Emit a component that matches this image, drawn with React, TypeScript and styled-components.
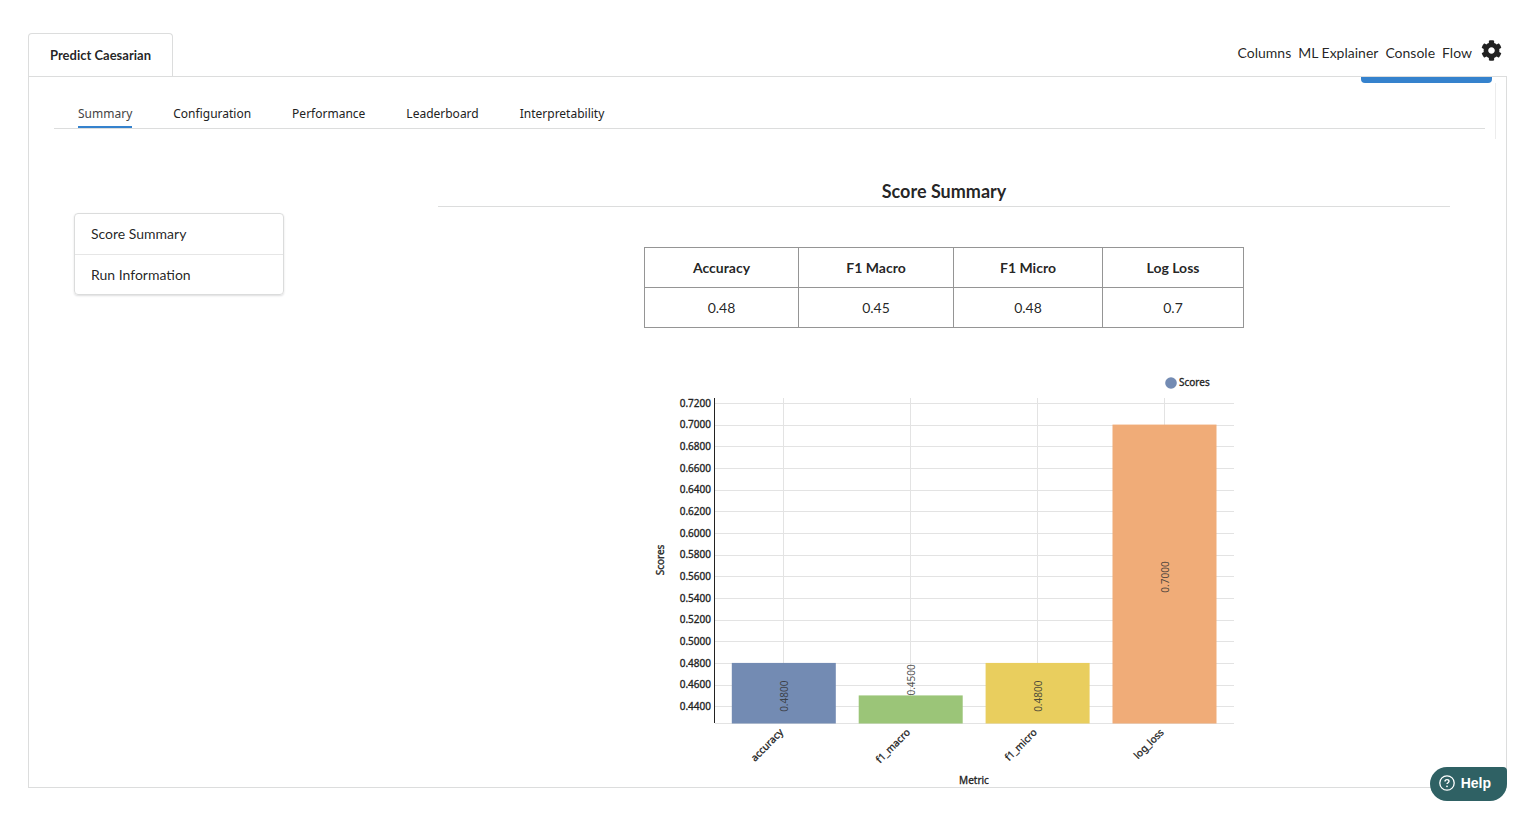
import React from "react";
import styled, { createGlobalStyle } from "styled-components";
import { FaCog } from "react-icons/fa";

const GlobalStyle = createGlobalStyle`
  *, *::before, *::after { box-sizing: border-box; }
  body {
    margin: 0;
    background: #fff;
    color: rgba(0, 0, 0, 0.87);
    font: 14px/20px Lato, "Liberation Sans", sans-serif;
  }
`;

const Page = styled.div`
  padding: 33px 20px 25px 28px;
`;

const Header = styled.header`
  display: flex;
  justify-content: space-between;
  align-items: flex-start;
`;

const ProjectTab = styled.button`
  min-width: 145px;
  height: 43px;
  padding: 0 20px;
  border: 1px solid #dcdddd;
  border-bottom: 0;
  border-radius: 4px 4px 0 0;
  background: #fff;
  color: rgba(0, 0, 0, 0.87);
  font: bold 13px/20px Lato, sans-serif;
`;

const HeaderLinks = styled.nav`
  display: flex;
  align-items: flex-start;
  gap: 7px;
  padding: 7px 5px 0 0;
`;

const HeaderLink = styled.a`
  padding-top: 3px;
  color: inherit;
  text-decoration: none;
`;

const GearButton = styled.button`
  display: flex;
  margin-left: 2px;
  padding: 0;
  border: 0;
  background: none;
  color: #212121;
`;

const Panel = styled.main`
  border: 1px solid #dcdddd;
`;

const ActionStrip = styled.div`
  display: flex;
  justify-content: flex-end;
  padding-right: 14px;
`;

const ActionButton = styled.button`
  width: 131px;
  height: 6px;
  padding: 0;
  border: 0;
  border-radius: 0 0 4px 4px;
  background: #3582cd;
`;

const TabArea = styled.div`
  margin-right: 10px;
  padding: 18px 10px 10px 25px;
  border-right: 1px solid #ececec;
`;

const Tabs = styled.nav`
  display: flex;
  gap: 41px;
  padding-left: 24px;
  border-bottom: 1px solid #dcdddd;
`;

const Tab = styled.button<{ $active?: boolean }>`
  height: 27px;
  padding: 0;
  border: 0;
  border-bottom: 2px solid ${(p) => (p.$active ? "#3582cd" : "transparent")};
  background: none;
  color: ${(p) => (p.$active ? "#444" : "#222")};
  font: 12px/20px "Noto Sans", sans-serif;
`;

const Content = styled.div`
  display: flex;
  align-items: flex-start;
  gap: 154px;
  padding: 40px 56px 0 45px;
`;

const SideMenu = styled.nav`
  flex: 0 0 210px;
  margin-top: 34px;
  border: 1px solid #dbdcdc;
  border-radius: 4px;
  box-shadow: 0 1px 2px rgba(34, 36, 38, 0.15);
`;

const SideItem = styled.a`
  display: flex;
  align-items: center;
  height: 40px;
  padding: 0 16px;
  color: inherit;
  text-decoration: none;

  & + & {
    border-top: 1px solid #e6e6e6;
  }
`;

const Report = styled.section`
  display: flex;
  flex: 1;
  flex-direction: column;
  align-items: center;
`;

const Title = styled.h3`
  align-self: stretch;
  margin: 0 0 40px;
  padding-bottom: 3px;
  border-bottom: 1px solid #dcdddd;
  font: bold 18px/24px Lato, sans-serif;
  text-align: center;
`;

const ScoreTable = styled.table`
  width: 600px;
  margin-bottom: 42px;
  border-collapse: collapse;
  table-layout: fixed;
  text-align: center;

  th,
  td {
    height: 40px;
    padding: 0;
    border: 1px solid #959595;
  }
`;

const HeadCell = styled.th<{ $width: number }>`
  width: ${(p) => p.$width}px;
`;

const Chart = styled.svg`
  display: block;
  width: 600px;
  height: 417px;
  font: 10px "Noto Sans", sans-serif;
  fill: #222;
`;

const HelpButton = styled.button`
  position: fixed;
  right: 20px;
  bottom: 12px;
  display: flex;
  align-items: center;
  gap: 6px;
  height: 34px;
  padding: 0 16px 2px 9px;
  border: 0;
  border-radius: 17px 4px 17px 17px;
  background: #2f6164;
  color: #fff;
  font: bold 14px/20px "Liberation Sans", sans-serif;
`;

const TABS = ["Summary", "Configuration", "Performance", "Leaderboard", "Interpretability"];

const SCORES = [
  { title: "Accuracy", key: "accuracy", value: 0.48, color: "#738bb3", width: 154 },
  { title: "F1 Macro", key: "f1_macro", value: 0.45, color: "#9bc578", width: 155 },
  { title: "F1 Micro", key: "f1_micro", value: 0.48, color: "#e9ce5e", width: 149 },
  { title: "Log Loss", key: "log_loss", value: 0.7, color: "#f0ac78", width: 141 },
];

const PLOT = { left: 71, right: 590, top: 28, bottom: 353, min: 0.425, max: 0.725 };
const TICKS = Array.from({ length: 15 }, (_, i) => 0.44 + i * 0.02);

const scaleY = (v: number) =>
  PLOT.bottom - ((v - PLOT.min) / (PLOT.max - PLOT.min)) * (PLOT.bottom - PLOT.top);
const centerX = (i: number) => 139.8 + i * 126.9;

function ScoreChart() {
  return (
    <Chart viewBox="0 0 600 417" role="img" aria-label="Scores by metric">
      <circle cx="527" cy="13" r="5.8" fill="#738bb3" />
      <text x="535" y="16" stroke="#222" strokeWidth="0.3">Scores</text>
      <g stroke="#e3e3e3" shapeRendering="crispEdges">
        {TICKS.map((t) => (
          <line key={t} x1={PLOT.left} x2={PLOT.right} y1={scaleY(t)} y2={scaleY(t)} />
        ))}
        <line x1={PLOT.left} x2={PLOT.right} y1={PLOT.bottom + 0.5} y2={PLOT.bottom + 0.5} />
        {SCORES.map((s, i) => (
          <line key={s.key} x1={centerX(i)} x2={centerX(i)} y1={PLOT.top} y2={PLOT.bottom} />
        ))}
      </g>
      <line x1="70.5" x2="70.5" y1={PLOT.top} y2={PLOT.bottom} stroke="#222" />
      <g textAnchor="end" stroke="#222" strokeWidth="0.3">
        {TICKS.map((t) => (
          <text key={t} x="67" y={Math.round(scaleY(t) + 0.3) + 3}>{t.toFixed(4)}</text>
        ))}
      </g>
      {SCORES.map((s, i) => {
        const x = centerX(i);
        const y = scaleY(s.value);
        const height = PLOT.bottom - y;
        const labelY = height > 40 ? (y + PLOT.bottom) / 2 : y - 19;
        return (
          <g key={s.key}>
            <rect x={x - 52} y={y - 0.5} width="104" height={height + 1} fill={s.color} />
            <text transform={`translate(${x + 4.6} ${labelY + 3}) rotate(-90)`} textAnchor="middle" fill="#333" fillOpacity="0.85">
              {s.value.toFixed(4)}
            </text>
            <text transform={`translate(${x} ${PLOT.bottom + 10}) rotate(-45)`} textAnchor="end" stroke="#222" strokeWidth="0.3">
              {s.key}
            </text>
          </g>
        );
      })}
      <text transform="translate(20 190) rotate(-90)" textAnchor="middle" stroke="#222" strokeWidth="0.3">Scores</text>
      <text x="330" y="414" textAnchor="middle" stroke="#222" strokeWidth="0.3">Metric</text>
    </Chart>
  );
}

export default function App() {
  return (
    <>
      <GlobalStyle />
      <Page>
        <Header>
          <ProjectTab type="button">Predict Caesarian</ProjectTab>
          <HeaderLinks>
            {["Columns", "ML Explainer", "Console", "Flow"].map((label) => (
              <HeaderLink key={label} href="#">{label}</HeaderLink>
            ))}
            <GearButton type="button" aria-label="Settings">
              <FaCog size={21} />
            </GearButton>
          </HeaderLinks>
        </Header>
        <Panel>
          <ActionStrip>
            <ActionButton type="button" aria-label="Action" />
          </ActionStrip>
          <TabArea>
            <Tabs>
              {TABS.map((label, i) => (
                <Tab key={label} type="button" $active={i === 0}>{label}</Tab>
              ))}
            </Tabs>
          </TabArea>
          <Content>
            <SideMenu>
              <SideItem href="#">Score Summary</SideItem>
              <SideItem href="#">Run Information</SideItem>
            </SideMenu>
            <Report>
              <Title>Score Summary</Title>
              <ScoreTable>
                <thead>
                  <tr>
                    {SCORES.map((s) => (
                      <HeadCell key={s.key} scope="col" $width={s.width}>{s.title}</HeadCell>
                    ))}
                  </tr>
                </thead>
                <tbody>
                  <tr>{SCORES.map((s) => <td key={s.key}>{s.value}</td>)}</tr>
                </tbody>
              </ScoreTable>
              <ScoreChart />
            </Report>
          </Content>
        </Panel>
      </Page>
      <HelpButton type="button">
        <svg width="16" height="16" viewBox="0 0 16 16" fill="none" stroke="#fff" aria-hidden="true">
          <circle cx="8" cy="8" r="7.2" strokeWidth="1.3" />
          <path d="M6 6.5c0-1.2.9-1.9 2-1.9s2 .7 2 1.7c0 1.4-2 1.4-2 2.8" strokeWidth="1.4" />
          <circle cx="8" cy="11.3" r=".9" fill="#fff" stroke="none" />
        </svg>
        Help
      </HelpButton>
    </>
  );
}
